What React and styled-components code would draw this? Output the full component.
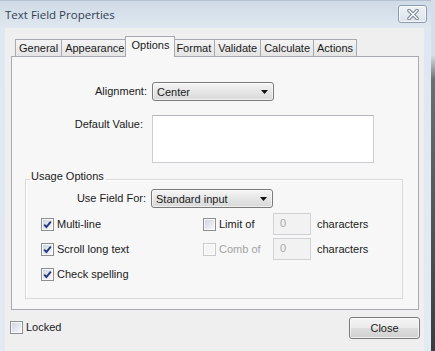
import React from 'react';
import styled, { createGlobalStyle } from 'styled-components';

const GlobalStyle = createGlobalStyle`
  body {
    margin: 0;
    background: #d9e1ea;
    font-family: "Liberation Sans", Arial, sans-serif;
    font-size: 11px;
    color: #1a1a1a;
  }
  #root {
    width: 435px;
    height: 351px;
  }
`;

const Screen = styled.div`
  display: flex;
  width: 435px;
  height: 351px;
  overflow: hidden;
`;

const Window = styled.div`
  flex: 1;
  display: flex;
  flex-direction: column;
  background: linear-gradient(#cfdbe7, #dfe7f0 26px, #e3eaf2);
  border-top: 1px solid #b4c2d1;
`;

const Edge = styled.div`
  width: 4px;
  background: linear-gradient(#d6dee7 0, #d6dee7 55px, #6b6e73 80px, #3a3b3e);
`;

const TitleBar = styled.div`
  height: 27px;
  display: flex;
  align-items: flex-start;
  justify-content: space-between;
  padding: 0 4px 0 5px;
`;

const Title = styled.div`
  font-family: "Open Sans", "Noto Sans", sans-serif;
  font-size: 11.5px;
  color: #34404d;
  padding-top: 6px;
`;

const CloseX = styled.button`
  margin-top: 4px;
  width: 29px;
  height: 18px;
  padding: 0;
  display: flex;
  align-items: center;
  justify-content: center;
  border: 1px solid #8c9bae;
  border-radius: 3px;
  background: linear-gradient(#eef2f7, #dde4ed);
  box-shadow: inset 0 0 0 1px rgba(255, 255, 255, 0.7);
`;

const Client = styled.div`
  flex: 1;
  display: flex;
  flex-direction: column;
  margin: 0 7px 0 5px;
  padding: 9px 5px 0 6px;
  background: #efefef;
`;

const TabStrip = styled.div`
  display: flex;
  align-items: flex-end;
  height: 20px;
  padding-left: 5px;
  margin-bottom: -1px;
  position: relative;
  z-index: 1;
`;

const Tab = styled.div`
  height: ${p => (p.$active ? 20 : 16)}px;
  line-height: 16px;
  padding: 0 ${p => (p.$active ? 5 : 3)}px;
  margin: 0 ${p => (p.$active ? -2 : 0)}px 0 ${p => (p.$active ? -3 : -1)}px;
  border: 1px solid #a7aab0;
  border-bottom: ${p => (p.$active ? 'none' : '1px solid #a7aab0')};
  background: ${p =>
    p.$active ? '#f7f7f7' : 'linear-gradient(#f4f4f4, #e4e4e4)'};
  position: relative;
  z-index: ${p => (p.$active ? 2 : 1)};
  white-space: nowrap;
`;

const Panel = styled.div`
  height: 254px;
  box-sizing: border-box;
  border: 1px solid #a7aab0;
  background: #f7f7f7;
  padding-top: 25px;
`;

const FormRow = styled.div`
  display: grid;
  grid-template-columns: ${p => p.$labelWidth}px auto;
  column-gap: 5px;
  align-items: ${p => (p.$top ? 'start' : 'center')};
  margin-top: ${p => p.$gap || 0}px;
`;

const Label = styled.label`
  text-align: right;
  padding-top: ${p => (p.$top ? 3 : 0)}px;
  padding-right: ${p => (p.$top ? 4 : 0)}px;
  line-height: 13px;
`;

const Select = styled.div`
  width: 122px;
  height: 19px;
  box-sizing: border-box;
  border: 1px solid #7a7a7a;
  border-radius: 3px;
  background: linear-gradient(#f6f6f6, #e6e6e6 50%, #d8d8d8);
  box-shadow: inset 0 0 0 1px rgba(255, 255, 255, 0.6);
  display: flex;
  align-items: center;
  justify-content: space-between;
  padding: 0 5px 0 4px;
`;

const Arrow = styled.svg`
  fill: #111;
`;

const TextArea = styled.div`
  width: 222px;
  height: 48px;
  box-sizing: border-box;
  border: 1px solid #c9ccd1;
  border-top-color: #b3b6bb;
  background: #fff;
`;

const Group = styled.fieldset`
  margin: 6px 15px 0 13px;
  padding: 0 0 12px 0;
  border: 1px solid #dadada;
  box-shadow: inset 1px 1px 0 #fff;
  min-width: 0;
`;

const Legend = styled.legend`
  margin-left: 4px;
  padding: 1px 2px 6px 1px;
  line-height: 13px;
`;

const OptionGrid = styled.div`
  display: grid;
  grid-template-columns: 162px 70px 38px 1fr;
  grid-auto-rows: 24px;
  row-gap: 1px;
  align-items: center;
  margin-top: 4px;
  padding-left: 15px;
`;

const Check = styled.label`
  display: flex;
  align-items: center;
  gap: 3px;
  color: ${p => (p.$disabled ? '#a3a3a3' : 'inherit')};
`;

const Box = styled.span`
  width: 13px;
  height: 13px;
  box-sizing: border-box;
  border: 1px solid ${p => (p.$disabled ? '#c9c9c9' : '#8e8f93')};
  background: ${p =>
    p.$disabled
      ? '#f5f5f5'
      : 'linear-gradient(135deg, #cdd1dc, #eceef4 70%, #fafafa)'};
  box-shadow: inset 0 0 0 1px rgba(255, 255, 255, 0.8);
  display: flex;
  align-items: center;
  justify-content: center;
`;

const NumberBox = styled.div`
  width: 38px;
  height: 22px;
  box-sizing: border-box;
  border: 1px solid #cfd1d4;
  background: #f2f2f2;
  color: #a9a9a9;
  padding: 3px 0 0 6px;
`;

const Suffix = styled.span`
  padding-left: 6px;
`;

const Footer = styled.div`
  display: flex;
  justify-content: space-between;
  align-items: center;
  margin: 5px -1px 0 -1px;
`;

const Button = styled.button`
  width: 71px;
  height: 22px;
  margin-top: 2px;
  font-family: inherit;
  font-size: 11px;
  color: inherit;
  border: 1px solid #7a7a7a;
  border-radius: 3px;
  background: linear-gradient(#f4f4f4, #ebebeb 50%, #dddddd 51%, #d0d0d0);
  box-shadow: inset 0 0 0 1px rgba(255, 255, 255, 0.7);
`;

const CheckMark = () => (
  <svg width="9" height="9" viewBox="0 0 9 9">
    <path d="M1.2 4.6 L3.4 7 L7.8 1.6" fill="none" stroke="#24377f" strokeWidth="1.9" />
  </svg>
);

const CheckBox = ({ checked, disabled, children }) => (
  <Check $disabled={disabled}>
    <Box $disabled={disabled}>{checked && <CheckMark />}</Box>
    {children}
  </Check>
);

const Dropdown = ({ value }) => (
  <Select>
    <span>{value}</span>
    <Arrow width="7" height="4" viewBox="0 0 7 4">
      <path d="M0 0h7L3.5 4z" />
    </Arrow>
  </Select>
);

const tabs = ['General', 'Appearance', 'Options', 'Format', 'Validate', 'Calculate', 'Actions'];

export default function App() {
  return (
    <Screen>
      <GlobalStyle />
      <Window>
        <TitleBar>
          <Title>Text Field Properties</Title>
          <CloseX aria-label="Close">
            <svg width="12" height="11" viewBox="0 0 12 11">
              <path d="M2 1.5 L10 9.5 M10 1.5 L2 9.5" stroke="#7b8795" strokeWidth="3.6" strokeLinecap="round" />
              <path d="M2 1.5 L10 9.5 M10 1.5 L2 9.5" stroke="#f7f9fb" strokeWidth="1.6" strokeLinecap="round" />
            </svg>
          </CloseX>
        </TitleBar>
        <Client>
          <TabStrip>
            {tabs.map(t => (
              <Tab key={t} $active={t === 'Options'}>{t}</Tab>
            ))}
          </TabStrip>
          <Panel>
            <FormRow $labelWidth={135}>
              <Label>Alignment:</Label>
              <Dropdown value="Center" />
            </FormRow>
            <FormRow $labelWidth={135} $gap={14} $top>
              <Label $top>Default Value:</Label>
              <TextArea />
            </FormRow>
            <Group>
              <Legend>Usage Options</Legend>
              <FormRow $labelWidth={120}>
                <Label>Use Field For:</Label>
                <Dropdown value="Standard input" />
              </FormRow>
              <OptionGrid>
                <CheckBox checked>Multi-line</CheckBox>
                <CheckBox>Limit of</CheckBox>
                <NumberBox>0</NumberBox>
                <Suffix>characters</Suffix>
                <CheckBox checked>Scroll long text</CheckBox>
                <CheckBox disabled>Comb of</CheckBox>
                <NumberBox>0</NumberBox>
                <Suffix>characters</Suffix>
                <CheckBox checked>Check spelling</CheckBox>
              </OptionGrid>
            </Group>
          </Panel>
          <Footer>
            <CheckBox>Locked</CheckBox>
            <Button>Close</Button>
          </Footer>
        </Client>
      </Window>
      <Edge />
    </Screen>
  );
}
